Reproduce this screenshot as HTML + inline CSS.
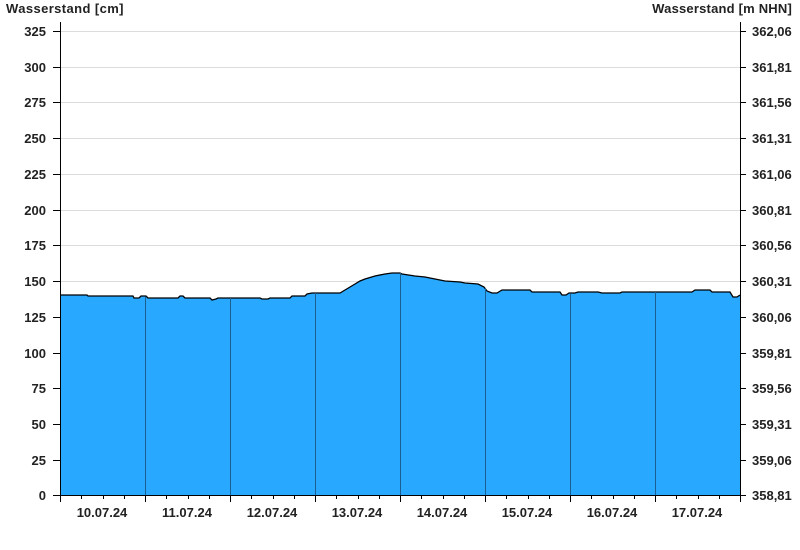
<!DOCTYPE html>
<html><head><meta charset="utf-8"><style>
html,body{margin:0;padding:0;background:#fff;}
svg{display:block;font-family:"Liberation Sans",Arial,sans-serif;font-weight:bold;font-size:13px;}
</style></head><body>
<svg width="800" height="550" viewBox="0 0 800 550" xmlns="http://www.w3.org/2000/svg">
<text x="6" y="13" fill="#222" style="font-size:13px;letter-spacing:0.4px">Wasserstand [cm]</text>
<text x="792" y="13" fill="#222" text-anchor="end" style="font-size:13px;letter-spacing:0.2px">Wasserstand [m NHN]</text>
<g stroke="#dcdcdc" stroke-width="1">
<line x1="60" x2="740" y1="31.5" y2="31.5"/><line x1="60" x2="740" y1="67.5" y2="67.5"/><line x1="60" x2="740" y1="102.5" y2="102.5"/><line x1="60" x2="740" y1="138.5" y2="138.5"/><line x1="60" x2="740" y1="174.5" y2="174.5"/><line x1="60" x2="740" y1="210.5" y2="210.5"/><line x1="60" x2="740" y1="245.5" y2="245.5"/><line x1="60" x2="740" y1="281.5" y2="281.5"/><line x1="60" x2="740" y1="317.5" y2="317.5"/><line x1="60" x2="740" y1="353.5" y2="353.5"/><line x1="60" x2="740" y1="388.5" y2="388.5"/><line x1="60" x2="740" y1="424.5" y2="424.5"/><line x1="60" x2="740" y1="460.5" y2="460.5"/>
</g>
<path d="M60,495 L60,295 L87,295 L88,296 L133,296 L134,298 L139,298 L141,296 L146,296 L148,298 L178,298 L180,296 L183,296 L185,298 L210,298 L212,300 L216,299 L218,298 L260,298 L262,299 L268,299 L270,298 L290,298 L292,296 L305,296 L307,294 L312,293 L340,293 L345,290 L350,287 L355,284 L360,281 L365,279 L375,276 L385,274 L392,273 L400,273 L402,274 L415,276 L425,277 L435,279 L445,281 L460,282 L465,283 L478,284 L484,287 L487,291 L492,293 L497,293 L502,290 L530,290 L532,292 L560,292 L562,295 L566,295 L569,293 L575,293 L578,292 L598,292 L602,293 L620,293 L622,292 L692,292 L695,290 L710,290 L712,292 L730,292 L733,297 L737,297 L740,295 L740,495 Z" fill="#29a8ff" stroke="none"/>
<path d="M60,295 L87,295 L88,296 L133,296 L134,298 L139,298 L141,296 L146,296 L148,298 L178,298 L180,296 L183,296 L185,298 L210,298 L212,300 L216,299 L218,298 L260,298 L262,299 L268,299 L270,298 L290,298 L292,296 L305,296 L307,294 L312,293 L340,293 L345,290 L350,287 L355,284 L360,281 L365,279 L375,276 L385,274 L392,273 L400,273 L402,274 L415,276 L425,277 L435,279 L445,281 L460,282 L465,283 L478,284 L484,287 L487,291 L492,293 L497,293 L502,290 L530,290 L532,292 L560,292 L562,295 L566,295 L569,293 L575,293 L578,292 L598,292 L602,293 L620,293 L622,292 L692,292 L695,290 L710,290 L712,292 L730,292 L733,297 L737,297 L740,295" fill="none" stroke="#000" stroke-width="1.3"/>
<g stroke="#1a5f8f" stroke-width="1">
<line x1="145.5" x2="145.5" y1="297" y2="495"/><line x1="230.5" x2="230.5" y1="298" y2="495"/><line x1="315.5" x2="315.5" y1="293" y2="495"/><line x1="400.5" x2="400.5" y1="273" y2="495"/><line x1="485.5" x2="485.5" y1="288" y2="495"/><line x1="570.5" x2="570.5" y1="294" y2="495"/><line x1="655.5" x2="655.5" y1="292" y2="495"/>
</g>
<g stroke="#000" stroke-width="1">
<line x1="60.5" x2="60.5" y1="22" y2="502"/>
<line x1="740.5" x2="740.5" y1="22" y2="495"/>
<line x1="53" x2="741" y1="495.5" y2="495.5"/>
<path d="M53,31.5h7M53,67.5h7M53,102.5h7M53,138.5h7M53,174.5h7M53,210.5h7M53,245.5h7M53,281.5h7M53,317.5h7M53,353.5h7M53,388.5h7M53,424.5h7M53,460.5h7"/>
<path d="M740,31.5h6M740,67.5h6M740,102.5h6M740,138.5h6M740,174.5h6M740,210.5h6M740,245.5h6M740,281.5h6M740,317.5h6M740,353.5h6M740,388.5h6M740,424.5h6M740,460.5h6M740,495.5h6"/>
<path d="M145.5,495v7M230.5,495v7M315.5,495v7M400.5,495v7M485.5,495v7M570.5,495v7M655.5,495v7M740.5,495v7"/>
<path d="M81.5,495v4M103.5,495v4M124.5,495v4M166.5,495v4M188.5,495v4M209.5,495v4M251.5,495v4M273.5,495v4M294.5,495v4M336.5,495v4M358.5,495v4M379.5,495v4M421.5,495v4M443.5,495v4M464.5,495v4M506.5,495v4M528.5,495v4M549.5,495v4M591.5,495v4M613.5,495v4M634.5,495v4M676.5,495v4M698.5,495v4M719.5,495v4"/>
</g>
<g fill="#222" text-anchor="end">
<text x="46" y="36">325</text><text x="46" y="72">300</text><text x="46" y="107">275</text><text x="46" y="143">250</text><text x="46" y="179">225</text><text x="46" y="215">200</text><text x="46" y="250">175</text><text x="46" y="286">150</text><text x="46" y="322">125</text><text x="46" y="358">100</text><text x="46" y="393">75</text><text x="46" y="429">50</text><text x="46" y="465">25</text><text x="46" y="500">0</text>
</g>
<g fill="#222">
<text x="752" y="36">362,06</text><text x="752" y="72">361,81</text><text x="752" y="107">361,56</text><text x="752" y="143">361,31</text><text x="752" y="179">361,06</text><text x="752" y="215">360,81</text><text x="752" y="250">360,56</text><text x="752" y="286">360,31</text><text x="752" y="322">360,06</text><text x="752" y="358">359,81</text><text x="752" y="393">359,56</text><text x="752" y="429">359,31</text><text x="752" y="465">359,06</text><text x="752" y="500">358,81</text>
</g>
<g fill="#222" text-anchor="middle">
<text x="102" y="517">10.07.24</text><text x="187" y="517">11.07.24</text><text x="272" y="517">12.07.24</text><text x="357" y="517">13.07.24</text><text x="442" y="517">14.07.24</text><text x="527" y="517">15.07.24</text><text x="612" y="517">16.07.24</text><text x="697" y="517">17.07.24</text>
</g>
</svg>
</body></html>
